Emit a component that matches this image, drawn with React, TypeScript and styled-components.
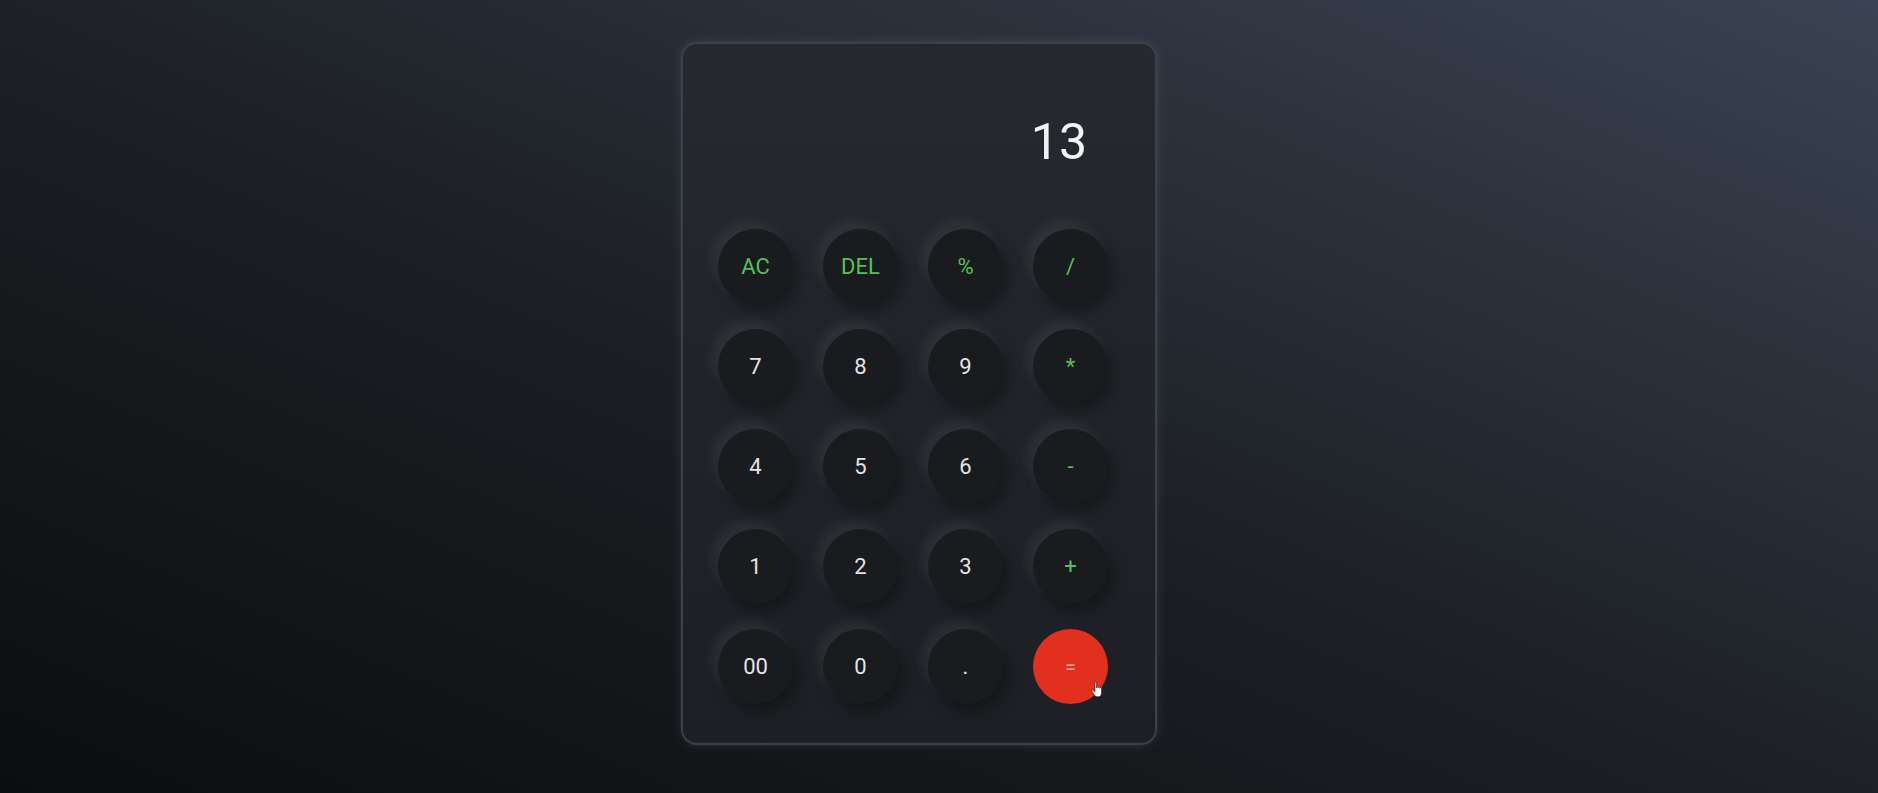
import React from "react";
import styled, { createGlobalStyle } from "styled-components";

const Global = createGlobalStyle`
  html, body { margin: 0; padding: 0; height: 100%; }
  body {
    background: linear-gradient(to top right, #0c0d0e 0%, #1b1e23 45%, #2c323c 75%, #3b4253 100%);
    font-family: Roboto, "Liberation Sans", sans-serif;
    overflow: hidden;
  }
  #root { min-height: 100vh; }
`;

const Page = styled.div`
  display: flex;
  justify-content: center;
  padding-top: 42px;
  padding-right: 40px;
  min-height: 100vh;
  box-sizing: border-box;
`;

const Card = styled.div`
  width: 476px;
  height: 703px;
  box-sizing: border-box;
  border: 2px solid #3c4049;
  border-radius: 16px;
  background: linear-gradient(to bottom, #26292f 0%, #212429 45%, #1d1f24 100%);
  box-shadow: 0 0 12px rgba(200, 210, 230, 0.12), 0 0 2px rgba(255, 255, 255, 0.08);
  display: flex;
  flex-direction: column;
`;

const Display = styled.div`
  height: 185px;
  box-sizing: border-box;
  padding: 73px 68px 0 0;
  text-align: right;
  color: #f2f2f2;
  font-size: 50px;
  line-height: 1;
  font-weight: 400;
`;

const Grid = styled.div`
  display: grid;
  grid-template-columns: repeat(4, 75px);
  grid-auto-rows: 75px;
  column-gap: 30px;
  row-gap: 25px;
  padding-left: 35px;
`;

const Key = styled.button<{ $tone: "num" | "op" | "eq" }>`
  position: relative;
  width: 75px;
  height: 75px;
  border-radius: 50%;
  border: none;
  padding: 0;
  display: flex;
  align-items: center;
  justify-content: center;
  font-family: Roboto, "Liberation Sans", sans-serif;
  font-size: ${(p) => (p.$tone === "eq" ? "20px" : "22px")};
  color: ${(p) => (p.$tone === "op" ? "#56c156" : p.$tone === "eq" ? "#f6b3a8" : "#e4e4e6")};
  background: ${(p) => (p.$tone === "eq" ? "#e2301f" : "#191b1f")};
  box-shadow: ${(p) =>
    p.$tone === "eq"
      ? "none"
      : "-6px -8px 12px rgba(255,255,255,0.065), 6px 8px 14px rgba(0,0,0,0.3)"};
  cursor: pointer;
`;

const Pointer = styled.svg`
  position: absolute;
  left: 58px;
  top: 52px;
  width: 14px;
  height: 17px;
`;

const keys: { label: string; tone: "num" | "op" | "eq" }[] = [
  { label: "AC", tone: "op" },
  { label: "DEL", tone: "op" },
  { label: "%", tone: "op" },
  { label: "/", tone: "op" },
  { label: "7", tone: "num" },
  { label: "8", tone: "num" },
  { label: "9", tone: "num" },
  { label: "*", tone: "op" },
  { label: "4", tone: "num" },
  { label: "5", tone: "num" },
  { label: "6", tone: "num" },
  { label: "-", tone: "op" },
  { label: "1", tone: "num" },
  { label: "2", tone: "num" },
  { label: "3", tone: "num" },
  { label: "+", tone: "op" },
  { label: "00", tone: "num" },
  { label: "0", tone: "num" },
  { label: ".", tone: "num" },
  { label: "=", tone: "eq" },
];

export default function App() {
  return (
    <>
      <Global />
      <Page>
        <Card>
          <Display>13</Display>
          <Grid>
            {keys.map((k) => (
              <Key key={k.label} $tone={k.tone}>
                {k.label}
                {k.tone === "eq" && (
                  <Pointer viewBox="0 0 14 17">
                    <path
                      d="M4 1.5c0-.8 1.4-.8 1.4 0V7l.3-1.2c.3-.7 1.4-.6 1.4.2v1l.3-.8c.3-.7 1.4-.6 1.4.2v1l.3-.6c.3-.6 1.4-.5 1.4.3V12c0 2-1.4 3.8-3.4 3.8H6.5C5 15.8 4 15 3.2 13.8L1 10.2c-.4-.7.4-1.4 1-.9L4 11V1.5z"
                      fill="#ffffff"
                      stroke="#222"
                      strokeWidth="0.6"
                    />
                  </Pointer>
                )}
              </Key>
            ))}
          </Grid>
        </Card>
      </Page>
    </>
  );
}
